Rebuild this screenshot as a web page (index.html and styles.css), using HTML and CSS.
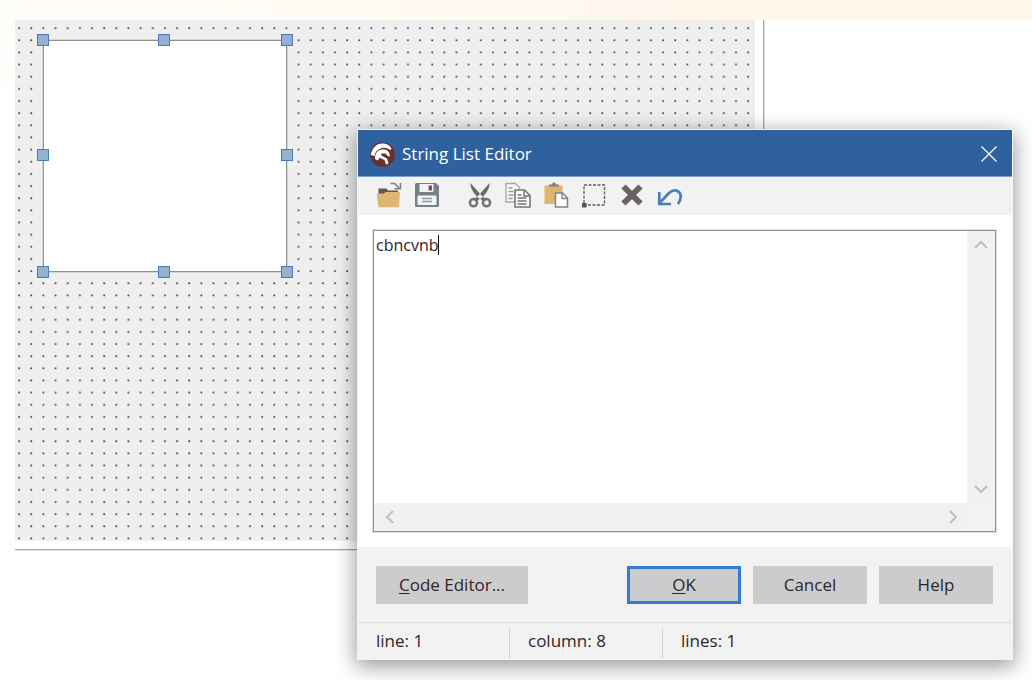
FILE: index.html
```html
<!DOCTYPE html>
<html lang="en">
<head>
<meta charset="utf-8">
<title>String List Editor</title>
<link rel="stylesheet" href="styles.css">
</head>
<body>
<main class="desktop">
  <div class="band"></div>
  <section class="form-frame" aria-label="Form designer">
    <div class="form-surface">
      <svg class="grid-dots" aria-hidden="true">
        <defs>
          <pattern id="dots" x="3" y="7" width="12.15" height="12.15" patternUnits="userSpaceOnUse">
            <rect x="0.3" y="0.3" width="1.7" height="1.7" fill="#453b38"/>
          </pattern>
        </defs>
        <rect width="100%" height="100%" fill="url(#dots)"/>
      </svg>
      <div class="memo">
        <i class="handle n w"></i><i class="handle n c"></i><i class="handle n e"></i>
        <i class="handle m w"></i><i class="handle m e"></i>
        <i class="handle s w"></i><i class="handle s c"></i><i class="handle s e"></i>
      </div>
    </div>
  </section>

  <section class="dialog" role="dialog" aria-labelledby="title">
    <header class="titlebar">
      <svg class="logo" viewBox="0 0 25 25" aria-hidden="true">
        <circle cx="12.5" cy="12.5" r="12.3" fill="#67302f"/>
        <path d="M.8 13C2 6 6.500 1.500 12 1.500c4.500 0 8 1.500 9.500 5.500l-1.500 1C17 5.500 13 5 9.500 7 6.500 8.500 5 10.500 4.500 14z" fill="#fff"/>
        <path d="M5 17C4.500 11 8.500 7.300 13 7.300c4.500 0 7 3 6.800 7.200l-2.300-.5-2-2.500-4.500 0 .5 2 5.500 3 1.500 5-2.500 1-1.500-4.500-5-2.200-1.500 2.700z" fill="#fff"/>
      </svg>
      <h1 class="title" id="title">String List Editor</h1>
      <button class="close" type="button" aria-label="Close">
        <svg width="18" height="18" viewBox="0 0 18 18"><path d="M1.500 1.500l15 15M16.500 1.500l-15 15" stroke="#fff" stroke-width="1.200" fill="none"/></svg>
      </button>
    </header>

    <div class="toolbar" role="toolbar" aria-label="Editing">
      <button class="tool" type="button" aria-label="Open">
        <svg viewBox="0 0 26 26"><path d="M2.500 12V6.500h8l1.500 2h10V12z" fill="#6d554b"/><path d="M1 12.500q0-1 1-1h6l1.500-1.500H23q1 0 1 1L23 24q-.2 1.200-1.200 1.200H3.200Q2.200 25.200 2 24z" fill="#dfb671"/><path d="M14.500 1.500h4l5 5M24.500 1v5.800H18.500" fill="none" stroke="#788386" stroke-width="1.500"/></svg>
      </button>
      <button class="tool" type="button" aria-label="Save">
        <svg viewBox="0 0 26 26"><path d="M1 2.500Q1 1 2.500 1H22l3 3v19.500q0 1.500-1.500 1.500h-21Q1 25 1 23.500z" fill="#748287"/><path d="M5.500 2h14v7q0 1-1 1h-12q-1 0-1-1z" fill="#f3f3f3"/><rect x="14.500" y="3.500" width="3.500" height="5" fill="#685b59"/><path d="M3.500 14.500q0-1 1-1h17q1 0 1 1V23h-19z" fill="#f3f3f3"/><path d="M8 16.500h10M8 19.500h10" stroke="#92999b" stroke-width="1.300"/></svg>
      </button>
      <button class="tool cut" type="button" aria-label="Cut">
        <svg viewBox="0 0 26 26"><path d="M3.500 1L15.500 14.500l4 3-2 2-6-3.500C7 12 3 6 3.500 1zM22.500 1L10.500 14.500l-4 3 2 2 6-3.500C19 12 23 6 22.500 1z" fill="#716a67"/><circle cx="6.500" cy="20.700" r="3.600" fill="none" stroke="#6e7678" stroke-width="2.500"/><circle cx="19.500" cy="20.700" r="3.600" fill="none" stroke="#6e7678" stroke-width="2.500"/></svg>
      </button>
      <button class="tool" type="button" aria-label="Copy">
        <svg viewBox="0 0 26 26"><path d="M1 1.500h9.500l4 4V20H1z" fill="#f7f7f5" stroke="#a9aaa5" stroke-width="1.400"/><path d="M3.500 6h4M3.500 9.500h5M3.500 13h5M3.500 16.500h4" stroke="#9a9b98" stroke-width="1.400"/><path d="M10 8h9.500l5.500 5.500V25H10z" fill="#fff" stroke="#777472" stroke-width="1.600"/><path d="M19 8v6h6" fill="none" stroke="#777472" stroke-width="1.400"/><path d="M12.500 13h4M12.500 16h9M12.500 19h9M12.500 22h9" stroke="#6f7475" stroke-width="1.400"/></svg>
      </button>
      <button class="tool" type="button" aria-label="Paste">
        <svg viewBox="0 0 26 26"><path d="M1.500 3.500h18V12h-7v10h-11z" fill="#dfb671"/><path d="M6 4.500V2.500h3q0-2 2-2t2 2h3v2z" fill="#7a7f80"/><path d="M12.500 11h7l5 5v9h-12z" fill="#fff" stroke="#858381" stroke-width="1.500"/><path d="M19 11v5.500h5.500" fill="none" stroke="#858381" stroke-width="1.300"/></svg>
      </button>
      <button class="tool" type="button" aria-label="Select all">
        <svg viewBox="0 0 26 26"><rect x="3" y="3" width="20.500" height="20" fill="none" stroke="#625a59" stroke-width="1.300" stroke-dasharray="3 1.500"/><rect x="1" y="21" width="4.500" height="4.500" fill="#5d4d53"/></svg>
      </button>
      <button class="tool" type="button" aria-label="Delete">
        <svg viewBox="0 0 26 26"><path d="M4.500 4.500l17 17M21.500 4.500l-17 17" stroke="#6b6361" stroke-width="6"/></svg>
      </button>
      <button class="tool" type="button" aria-label="Undo">
        <svg viewBox="0 0 26 26"><path d="M3 20.500L12 11q4.500-4 8.500-2c4.500 2.500 4 8 .5 13" fill="none" stroke="#4b7eb9" stroke-width="2.700"/><path d="M2.300 10v12H14" fill="none" stroke="#4b7eb9" stroke-width="2.700"/></svg>
      </button>
    </div>

    <div class="body">
      <div class="editor">
        <div class="text-wrap">
          <textarea class="text" aria-label="Strings" spellcheck="false">cbncvnb</textarea>
          <i class="caret"></i>
        </div>
        <div class="vscroll">
          <button class="arrow" type="button" aria-label="Scroll up"><svg width="14" height="14" viewBox="0 0 14 14"><path d="M1 10l6-6 6 6"/></svg></button>
          <button class="arrow" type="button" aria-label="Scroll down"><svg width="14" height="14" viewBox="0 0 14 14"><path d="M1 4l6 6 6-6"/></svg></button>
        </div>
        <div class="hscroll">
          <button class="arrow" type="button" aria-label="Scroll left"><svg width="14" height="14" viewBox="0 0 14 14"><path d="M10 1L4 7l6 6"/></svg></button>
          <button class="arrow" type="button" aria-label="Scroll right"><svg width="14" height="14" viewBox="0 0 14 14"><path d="M4 1l6 6-6 6"/></svg></button>
        </div>
        <div class="corner"></div>
      </div>
    </div>

    <div class="actions">
      <button class="btn wide" type="button"><u>C</u>ode Editor...</button>
      <button class="btn default" type="button"><u>O</u>K</button>
      <button class="btn" type="button">Cancel</button>
      <button class="btn" type="button">Help</button>
    </div>

    <footer class="status">
      <span class="cell">line: 1</span>
      <span class="cell">column: 8</span>
      <span class="cell">lines: 1</span>
    </footer>
  </section>
</main>
</body>
</html>
```
FILE: styles.css
```css
* { box-sizing: border-box; }
body {
  margin: 0;
  background: #fff;
  color: #30252b;
  font: 17px/24px "Open Sans", "Noto Sans", sans-serif;
}
button { font: inherit; color: inherit; border: 0; padding: 0; background: none; }
svg { display: block; }

.desktop {
  position: relative;
  min-height: 680px;
  overflow: hidden;
  background: radial-gradient(circle at 0 0, #fffdf9, #fff 160px);
}
.band {
  height: 20px;
  background: linear-gradient(to right, #fffdfa, #fff7ec 70%);
}
.form-frame {
  margin: 0 268px 0 15px;
  padding: 0 8px 8px 0;
  background: #fff;
  border-right: 1px solid #a4a6a0;
  border-bottom: 1px solid #a4a6a0;
  box-shadow: 1px 1px #e2e2df;
}
.form-surface {
  position: relative;
  height: 521px;
  background: #efefef;
}
.grid-dots { width: 100%; height: 100%; }
.memo {
  position: absolute;
  left: 28px;
  top: 20px;
  width: 244px;
  height: 232px;
  background: #fff;
  border: 1px solid #929292;
  box-shadow: 0 0 0 1px #d6d6d6;
}
.handle {
  position: absolute;
  width: 12px;
  height: 12px;
  background: #94b0d2;
  border: 1px solid #4b7ab6;
}
.n { top: -7px; }
.m { top: 108px; }
.s { bottom: -7px; }
.w { left: -7px; }
.c { left: 114px; }
.e { right: -7px; }

.dialog {
  position: absolute;
  left: 357px;
  right: 19px;
  top: 129px;
  border: 1px solid #f4f4f4;
  background: #f2f2f2;
  box-shadow: 0 5px 20px 1px rgba(0, 0, 0, 0.42);
}
.titlebar {
  display: flex;
  align-items: center;
  gap: 7px;
  height: 47px;
  padding: 2px 14px 0 12px;
  background: #2e619d;
  border-bottom: 1px solid #7fa2cb;
  color: #fff;
}
.logo { width: 25px; height: 25px; }
.title { flex: 1; margin: 0; font-size: 17px; font-weight: 400; }
.toolbar {
  display: flex;
  gap: 12px;
  height: 38px;
  padding: 5px 18px;
}
.tool { width: 26px; height: 26px; }
.cut { margin-left: 15px; }
.body { padding: 15px 16px 15px 15px; background: #fff; }
.editor {
  display: grid;
  grid-template-columns: 1fr 28px;
  grid-template-rows: 272px 28px;
  border: 1px solid #929292;
  box-shadow: 0 0 0 1px #dedede;
}
.text-wrap { position: relative; }
.text {
  display: block;
  width: 100%;
  height: 100%;
  padding: 2px;
  border: 0;
  outline: 0;
  resize: none;
  overflow: hidden;
  font: inherit;
  font-size: 16px;
  color: inherit;
}
.caret {
  position: absolute;
  left: 64px;
  top: 4px;
  width: 1px;
  height: 20px;
  background: #111;
}
.vscroll, .hscroll { display: flex; justify-content: space-between; background: #f1f1f1; }
.vscroll { flex-direction: column; }
.hscroll { padding-left: 2px; }
.corner { background: #f2f2f2; }
.arrow { display: grid; place-items: center; width: 28px; height: 28px; }
.arrow path { fill: none; stroke: #bfbfbf; stroke-width: 2; }

.actions {
  display: flex;
  gap: 12px;
  padding: 19px 19px 18px 18px;
}
.btn {
  width: 114px;
  height: 38px;
  background: #ccc;
}
.wide { width: 152px; margin-right: auto; }
.default { border: 3px solid #3679d2; }
u { text-underline-offset: 2px; }

.status {
  display: flex;
  padding: 5px 0 1px;
  border-top: 1px solid #dedede;
}
.cell { width: 153px; padding: 1px 18px 5px; border-right: 1px solid #d0d0d0; }
.cell:first-child { width: 152px; }
.cell:last-child { border: 0; }
```
